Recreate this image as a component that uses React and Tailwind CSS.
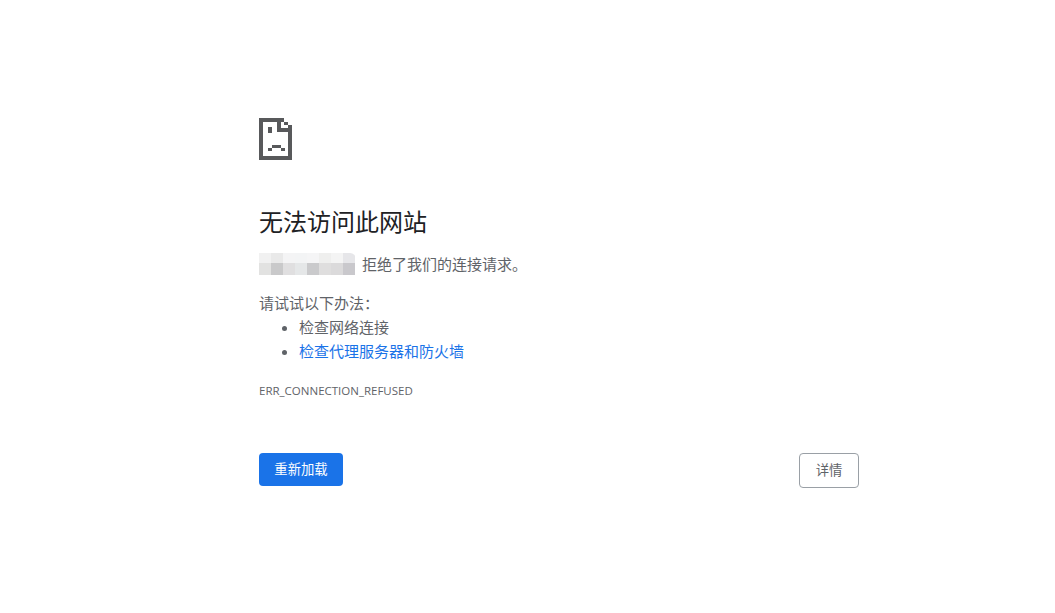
const blurTop = ['#f1f1f1', '#e9e9e9', '#f4f4f5', '#f3f4f5', '#f5f5f6', '#efefee', '#f4f4f4', '#e6e6e9'];
const blurBottom = ['#e2e2e1', '#c9c9ca', '#e0dfe0', '#e5e7e8', '#cacacc', '#dfdede', '#dbdadb', '#c9c8cc'];

// Chrome's pixel-art sad page
const SadPage = () => (
  <svg width="33" height="42" viewBox="0 0 33 42" shapeRendering="crispEdges" fill="#58595b">
    <path d="M0 0h25v4h4v3h4v35H0zM4 4v34h25V14H18V4z" fillRule="evenodd" />
    <path d="M22 4h3v3h4v3h-7z" fill="#fff" />
    <path d="M9 9h4v6H9z" />
    <path d="M13 27h9v3H13zM9 30h4v3H9zM22 30h4v3h-4z" />
  </svg>
);

const App = () => {
  return (
    <div className="min-h-screen bg-white font-['Open_Sans','Noto_Sans_CJK_SC',sans-serif] text-[#5f6368]">
      <div className="w-[600px] ml-[259px] pt-[118px]">
        <SadPage />

        <h1 className="mt-[46px] text-2xl leading-[32px] font-normal text-[#202124]">无法访问此网站</h1>

        <div className="mt-[15px] flex items-center h-[22px] text-[15px]">
          <div className="w-[97px] h-[22px] shrink-0 overflow-hidden rounded-tr-[6px]">
            <div className="flex h-[10px]">
              {blurTop.map((color, i) => (
                <div key={i} className="w-[12px] shrink-0" style={{ backgroundColor: color }} />
              ))}
            </div>
            <div className="flex h-[12px]">
              {blurBottom.map((color, i) => (
                <div key={i} className="w-[12px] shrink-0" style={{ backgroundColor: color }} />
              ))}
            </div>
          </div>
          <span className="ml-[6px]">拒绝了我们的连接请求。</span>
        </div>

        <p className="mt-[16px] text-[15px] leading-[24px]">请试试以下办法：</p>
        <ul className="list-disc pl-[40px] text-[15px] leading-[24px]">
          <li>检查网络连接</li>
          <li>
            <a className="text-[#1a73e8]" href="#">检查代理服务器和防火墙</a>
          </li>
        </ul>

        <div className="mt-[20px] text-[11.5px] leading-[16px]">ERR_CONNECTION_REFUSED</div>

        <div className="mt-[54px] flex items-start justify-between">
          <button className="w-[84px] h-[33px] rounded-[4px] bg-[#1a73e8] text-white text-[13.333px]">重新加载</button>
          <button className="w-[60px] h-[35px] rounded-[4px] border border-[#9aa0a6] bg-white text-[#5f6368] text-[13.333px]">详情</button>
        </div>
      </div>
    </div>
  );
};

export default App;
